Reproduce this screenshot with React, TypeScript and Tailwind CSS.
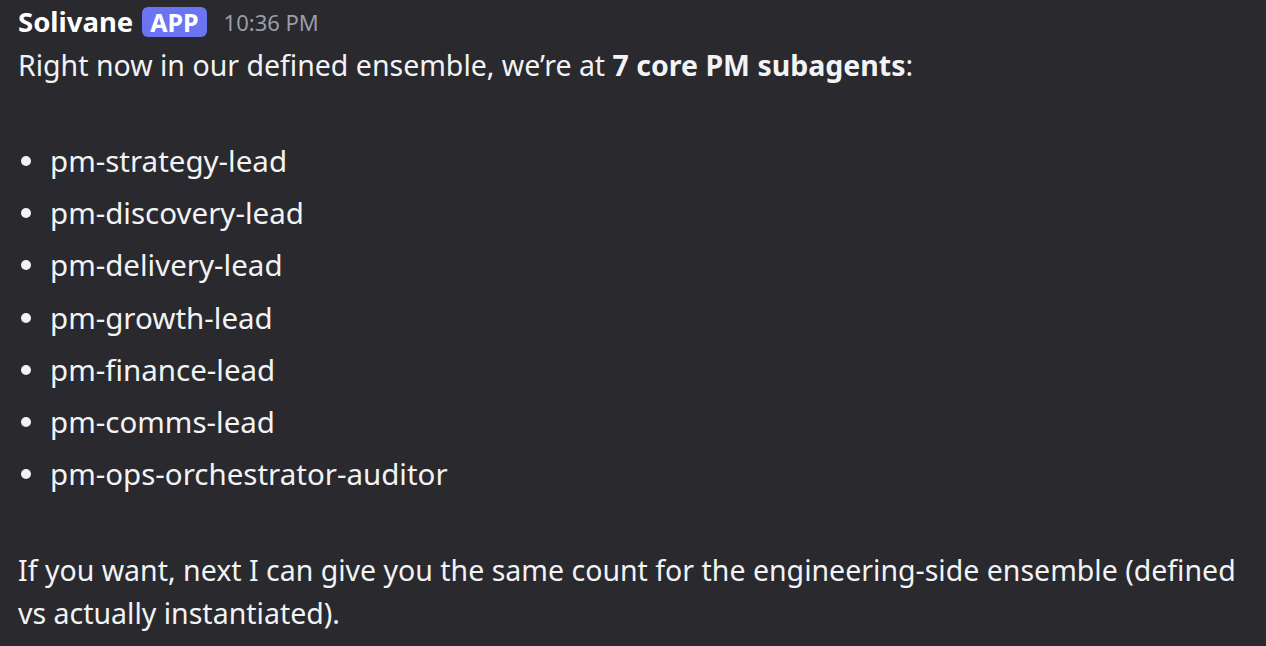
const items = [
  'pm-strategy-lead',
  'pm-discovery-lead',
  'pm-delivery-lead',
  'pm-growth-lead',
  'pm-finance-lead',
  'pm-comms-lead',
  'pm-ops-orchestrator-auditor',
];

export default function App() {
  return (
    <div className="min-h-screen w-full bg-[#29292e] text-[#f2f3f5] font-['Noto_Sans',sans-serif] pl-[18px] pr-[6px] pt-[2px] overflow-hidden">
      <div className="flex items-center h-[40px]">
        <span className="text-[27.5px] font-bold text-white leading-none">Solivane</span>
        <span className="ml-[9px] bg-[#6b74f2] text-white text-[25px] font-bold leading-none rounded-[6px] px-[8px] h-[30px] flex items-center">
          APP
        </span>
        <span className="ml-[17px] text-[22px] text-[#9a9ca6] leading-none">10:36 PM</span>
      </div>
      <p className="text-[28.5px] leading-[43px] mt-[2px]">
        Right now in our defined ensemble, we’re at <strong className="font-bold">7 core PM subagents</strong>:
      </p>
      <ul className="mt-[48px] flex flex-col">
        {items.map((item) => (
          <li key={item} className="flex items-center h-[52.2px] text-[29.5px]">
            <span className="w-[10px] h-[10px] rounded-full bg-[#f2f3f5] ml-[3px] mr-[19px]" />
            {item}
          </li>
        ))}
      </ul>
      <p className="text-[28.5px] leading-[43px] mt-[49px] max-w-[1236px]">
        If you want, next I can give you the same count for the engineering-side ensemble (defined vs actually
        instantiated).
      </p>
    </div>
  );
}
